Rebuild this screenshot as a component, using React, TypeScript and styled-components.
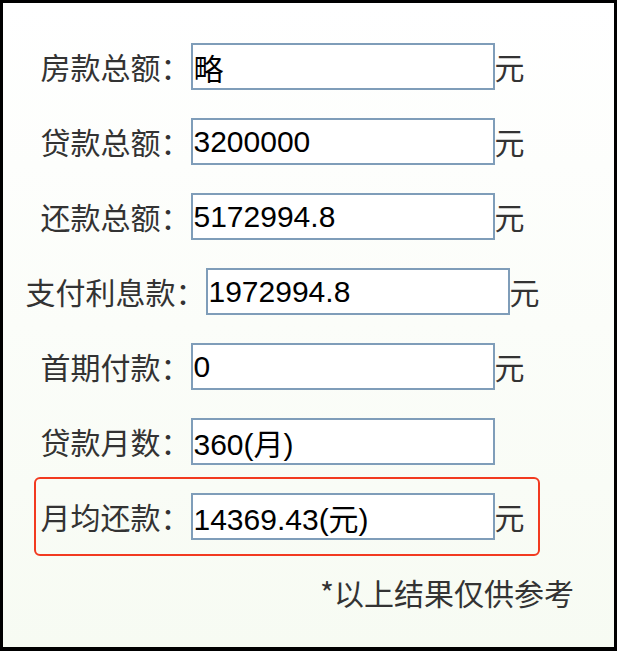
import React from "react"
import styled, { createGlobalStyle } from "styled-components"

const GlobalStyle = createGlobalStyle`
  html, body {
    margin: 0;
    padding: 0;
  }
  body {
    font-family: "Noto Sans CJK SC", "Noto Sans", sans-serif;
  }
`

interface Field {
  label: string
  value: string
  unit?: boolean
}

const fields: Field[] = [
  { label: "房款总额：", value: "略", unit: true },
  { label: "贷款总额：", value: "3200000", unit: true },
  { label: "还款总额：", value: "5172994.8", unit: true },
  { label: "支付利息款：", value: "1972994.8", unit: true },
  { label: "首期付款：", value: "0", unit: true },
  { label: "贷款月数：", value: "360(月)", unit: false },
]

function FieldRow({ label, value, unit }: Field) {
  return (
    <Row>
      <Label>{label}</Label>
      <Input readOnly value={value} />
      <Unit $hidden={!unit}>元</Unit>
    </Row>
  )
}

export default function App() {
  return (
    <Frame>
      <GlobalStyle />
      <Form>
        {fields.map((f) => (
          <FieldRow key={f.label} {...f} />
        ))}
        <Highlight>
          <FieldRow label="月均还款：" value="14369.43(元)" unit />
        </Highlight>
        <Note>*以上结果仅供参考</Note>
      </Form>
    </Frame>
  )
}

const Frame = styled.div`
  box-sizing: border-box;
  width: 617px;
  height: 651px;
  border: 3px solid #000;
  border-bottom-width: 4px;
  background: linear-gradient(#ffffff, #f7fbf3);
  overflow: hidden;
`

const Form = styled.div`
  width: 559px;
  padding-top: 40px;
  display: flex;
  flex-direction: column;
  gap: 28px;
`

const Row = styled.div`
  display: flex;
  align-items: center;
  justify-content: center;
  height: 47px;
`

const Label = styled.span`
  font-size: 30px;
  line-height: 47px;
  color: #333;
  white-space: nowrap;
`

const Input = styled.input`
  box-sizing: border-box;
  width: 304px;
  height: 47px;
  margin: 0;
  padding: 0 1px;
  border: 2px solid #7f9db9;
  border-radius: 0;
  background: #fff;
  color: #000;
  font-family: "Liberation Sans", "Noto Sans CJK SC", sans-serif;
  font-size: 30px;
  outline: none;
`

const Unit = styled.span<{ $hidden?: boolean }>`
  font-size: 30px;
  line-height: 47px;
  color: #333;
  visibility: ${(p) => (p.$hidden ? "hidden" : "visible")};
`

const Highlight = styled.div`
  box-sizing: border-box;
  width: 506px;
  margin: -16px 0 0 31px;
  padding: 14px 9px 14px 0;
  border: 2px solid #f23a20;
  border-radius: 6px;
`

const Note = styled.div`
  margin-top: -10px;
  padding-left: 317px;
  font-size: 30px;
  line-height: 36px;
  color: #333;
  white-space: nowrap;
`
